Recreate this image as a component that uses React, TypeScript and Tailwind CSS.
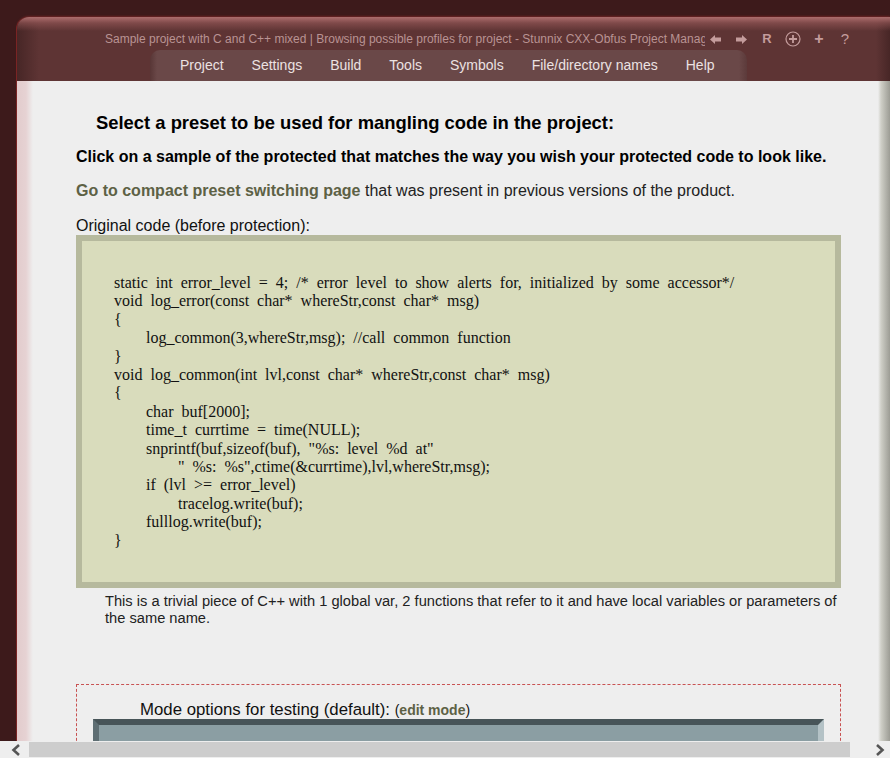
import React from 'react';

const menu = ['Project', 'Settings', 'Build', 'Tools', 'Symbols', 'File/directory names', 'Help'];

const code: [number, string][] = [
  [0, 'static int error_level = 4; /* error level to show alerts for, initialized by some accessor*/'],
  [0, 'void log_error(const char* whereStr,const char* msg)'],
  [0, '{'],
  [1, 'log_common(3,whereStr,msg); //call common function'],
  [0, '}'],
  [0, 'void log_common(int lvl,const char* whereStr,const char* msg)'],
  [0, '{'],
  [1, 'char buf[2000];'],
  [1, 'time_t currtime = time(NULL);'],
  [1, 'snprintf(buf,sizeof(buf), "%s: level %d at"'],
  [2, '" %s: %s",ctime(&currtime),lvl,whereStr,msg);'],
  [1, 'if (lvl >= error_level)'],
  [2, 'tracelog.write(buf);'],
  [1, 'fulllog.write(buf);'],
  [0, '}'],
];

const ArrowLeft = () => (
  <svg width="11" height="9" viewBox="0 0 11 9" className="fill-[#c49c9c]">
    <path d="M0 4.5 L5 0 L5 2.6 L11 2.6 L11 6.4 L5 6.4 L5 9 Z" />
  </svg>
);

const ArrowRight = () => (
  <svg width="11" height="9" viewBox="0 0 11 9" className="fill-[#c49c9c]">
    <path d="M11 4.5 L6 0 L6 2.6 L0 2.6 L0 6.4 L6 6.4 L6 9 Z" />
  </svg>
);

const CirclePlus = () => (
  <svg width="16" height="16" viewBox="0 0 16 16" fill="none" className="stroke-[#c49c9c]">
    <circle cx="8" cy="8" r="7" strokeWidth="1.2" />
    <path d="M8 4 V12 M4 8 H12" strokeWidth="1.8" />
  </svg>
);

const Chevron = ({ dir }: { dir: 'left' | 'right' }) => (
  <svg width="10" height="12" viewBox="0 0 10 12" fill="none" className="stroke-[#555555]">
    <path d={dir === 'left' ? 'M8 1 L2.5 6 L8 11' : 'M2 1 L7.5 6 L2 11'} strokeWidth="2.6" />
  </svg>
);

const Header: React.FC = () => (
  <header className="h-[64px] flex flex-col rounded-tl-[12px] bg-[linear-gradient(180deg,rgba(176,112,112,0.95)_0px,rgba(150,88,88,0.6)_6px,rgba(94,52,52,0)_14px),linear-gradient(90deg,#472626_0px,#5e3434_22px,#5e3434_calc(100%-14px),#472626_100%)]">
    <div className="h-[33px] flex items-end pb-[4px] pl-[88px]">
      <div className="w-[600px] overflow-hidden whitespace-nowrap text-[12px] leading-[14px] text-[#b99393]">
        Sample project with C and C++ mixed | Browsing possible profiles for project - Stunnix CXX-Obfus Project Manager
      </div>
      <div className="-ml-[3px] flex items-center h-[14px] text-[#c49c9c] text-[14px]">
        <span className="w-[26px] flex justify-center"><ArrowLeft /></span>
        <span className="w-[26px] flex justify-center"><ArrowRight /></span>
        <span className="w-[26px] flex justify-center font-bold text-[13px]">R</span>
        <span className="w-[26px] flex justify-center"><CirclePlus /></span>
        <span className="w-[26px] flex justify-center font-bold text-[16px]">+</span>
        <span className="w-[26px] flex justify-center text-[15px]">?</span>
      </div>
    </div>
    <nav className="ml-[133px] w-[597px] h-[31px] rounded-t-[10px] flex items-center gap-[28px] pl-[30px] text-[14px] text-[#ece2e2] bg-[linear-gradient(90deg,#583636_0px,#6a4848_7px,#6a4848_calc(100%-8px),#5c3a3a_100%)]">
      {menu.map((m) => (
        <span key={m}>{m}</span>
      ))}
    </nav>
  </header>
);

export default function App() {
  return (
    <div className="w-[890px] h-[758px] overflow-hidden flex flex-col bg-[#3d1a1b] font-['Liberation_Sans',Arial,sans-serif]">
      <div className="h-[741px] overflow-hidden flex flex-col pt-[17px] pl-[17px]">
        <div className="flex-1 flex flex-col rounded-tl-[12px] shadow-[-1px_0_0_#7a2424,0_-1px_2px_#6a2424]">
          <Header />
          <main className="flex-1 pl-[59px] pr-[49px] bg-[linear-gradient(90deg,#e2cccd_0px,#e6d2d3_9px,#eeeeee_16px,#eeeeee_calc(100%-12px),#cfcfc7_calc(100%-9px),#9c9c94_100%)]">
            <h1 className="pt-[31px] pl-[20px] text-[18.4px] leading-[21px] font-bold text-black">
              Select a preset to be used for mangling code in the project:
            </h1>
            <p className="mt-[15px] text-[16px] leading-[18px] font-bold text-black">
              Click on a sample of the protected that matches the way you wish your protected code to look like.
            </p>
            <p className="mt-[16px] text-[16px] leading-[18px] text-[#222222]">
              <span className="font-bold text-[#5d6145]">Go to compact preset switching page</span> that was present in previous versions of the product.
            </p>
            <p className="mt-[17px] text-[16px] leading-[18px] text-[#111111]">Original code (before protection):</p>
            <div className="border-[6px] border-[#b6b99d] bg-[#d9dcbc] pt-[33px] pb-[32px] pl-[32px] font-['Liberation_Serif','Times_New_Roman',serif] text-[16px] leading-[18.4px] text-[#111111] [word-spacing:4px]">
              {code.map(([lvl, text], i) => (
                <div
                  key={i}
                  className={`whitespace-pre ${lvl === 1 ? 'pl-[32px]' : lvl === 2 ? 'pl-[64px]' : ''}`}
                >
                  {text}
                </div>
              ))}
            </div>
            <p className="mt-[5px] pl-[29px] text-[14.67px] leading-[17px] text-[#222222]">
              This is a trivial piece of C++ with 1 global var, 2 functions that refer to it and have local variables or parameters of the same name.
            </p>
            <div className="mt-[57px] border border-dashed border-[#c85252] px-[16px] pt-[16px]">
              <p className="pl-[47px] text-[16.8px] leading-[18px] text-[#111111]">
                Mode options for testing (default):{' '}
                <span className="text-[14px]">
                  (<span className="font-bold text-[#5d6145]">edit mode</span>)
                </span>
              </p>
              <div className="h-[60px] border-t-[6px] border-l-[6px] border-r-[6px] border-t-[#475458] border-l-[#5e6e73] border-r-[#b4c2c6] bg-[#8b9ea3]" />
            </div>
          </main>
        </div>
      </div>
      <div className="h-[17px] flex items-center bg-[#eeeeee]">
        <div className="w-[29px] pl-[3px] flex justify-center"><Chevron dir="left" /></div>
        <div className="h-[15px] w-[821px] bg-[#cdcdcd]" />
        <div className="flex-1 pl-[20px] flex justify-center"><Chevron dir="right" /></div>
      </div>
    </div>
  );
}
